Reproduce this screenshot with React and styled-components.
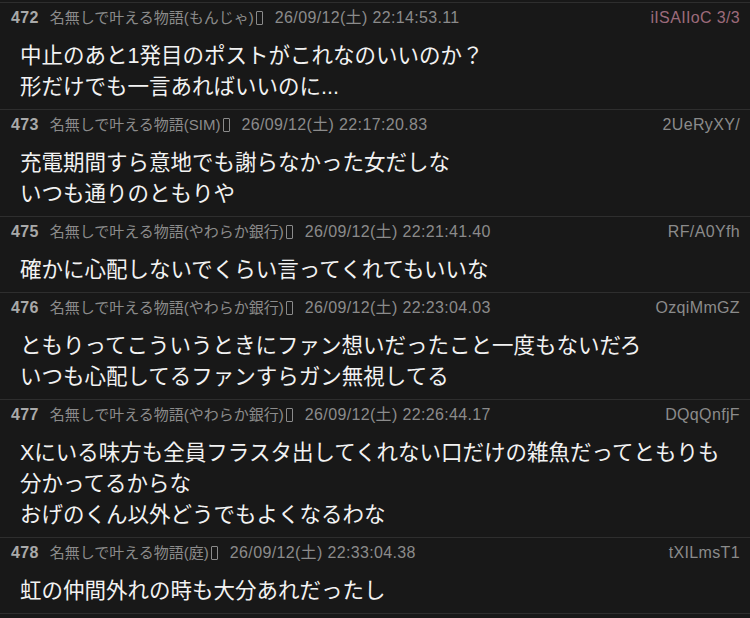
import React from 'react';
import styled, { createGlobalStyle } from 'styled-components';

const GlobalStyle = createGlobalStyle`
  html, body {
    margin: 0;
    padding: 0;
    background: #181818;
  }
  body {
    font-family: "Liberation Sans", "Noto Sans CJK JP", sans-serif;
    -webkit-font-smoothing: antialiased;
  }
`;

const posts = [
  {
    no: 472,
    name: '名無しで叶える物語(もんじゃ)',
    date: '26/09/12(土) 22:14:53.11',
    id: 'iISAIIoC 3/3',
    own: true,
    lines: ['中止のあと1発目のポストがこれなのいいのか？', '形だけでも一言あればいいのに...'],
  },
  {
    no: 473,
    name: '名無しで叶える物語(SIM)',
    date: '26/09/12(土) 22:17:20.83',
    id: '2UeRyXY/',
    lines: ['充電期間すら意地でも謝らなかった女だしな', 'いつも通りのともりや'],
  },
  {
    no: 475,
    name: '名無しで叶える物語(やわらか銀行)',
    date: '26/09/12(土) 22:21:41.40',
    id: 'RF/A0Yfh',
    lines: ['確かに心配しないでくらい言ってくれてもいいな'],
  },
  {
    no: 476,
    name: '名無しで叶える物語(やわらか銀行)',
    date: '26/09/12(土) 22:23:04.03',
    id: 'OzqiMmGZ',
    lines: ['ともりってこういうときにファン想いだったこと一度もないだろ', 'いつも心配してるファンすらガン無視してる'],
  },
  {
    no: 477,
    name: '名無しで叶える物語(やわらか銀行)',
    date: '26/09/12(土) 22:26:44.17',
    id: 'DQqQnfjF',
    lines: [
      'Xにいる味方も全員フラスタ出してくれない口だけの雑魚だってともりも',
      '分かってるからな',
      'おげのくん以外どうでもよくなるわな',
    ],
  },
  {
    no: 478,
    name: '名無しで叶える物語(庭)',
    date: '26/09/12(土) 22:33:04.38',
    id: 'tXILmsT1',
    lines: ['虹の仲間外れの時も大分あれだったし'],
  },
];

const Thread = styled.div`
  padding-top: 2px;
  border-bottom: 1px solid #2e2e2e;
`;

const Post = styled.div`
  border-top: 1px solid #2e2e2e;
  padding: 5px 10px 6px 11px;
`;

const Header = styled.div`
  display: flex;
  align-items: center;
  height: 20px;
  font-size: 15px;
  line-height: 20px;
  color: #8b8b8b;
  white-space: nowrap;
`;

// latin parts of the header render wider on the original device
const Latin = styled.span`
  font-size: 16px;
  letter-spacing: 0.35px;
`;

const Num = styled(Latin)`
  font-weight: 700;
  color: #a9a9a9;
  margin-right: 11px;
`;

const Name = styled.span`
  display: inline-flex;
  align-items: center;
  margin-right: 12px;
`;

const Tofu = styled.span`
  display: inline-block;
  width: 5px;
  height: 12px;
  margin-left: 2px;
  border: 1px solid #8b8b8b;
  border-radius: 1px;
`;

const PostId = styled(Latin)`
  margin-left: auto;
  color: ${(p) => (p.$own ? '#9c6b7b' : '#8b8b8b')};
`;

const Body = styled.div`
  margin-top: 13px;
  padding-left: 9px;
  font-size: 21.5px;
  line-height: 31px;
  color: #f2f2f2;
  white-space: nowrap;
`;

export default function App() {
  return (
    <>
      <GlobalStyle />
      <Thread>
        {posts.map((p) => (
          <Post key={p.no}>
            <Header>
              <Num>{p.no}</Num>
              <Name>
                {p.name}
                <Tofu />
              </Name>
              <Latin>{p.date}</Latin>
              <PostId $own={p.own}>{p.id}</PostId>
            </Header>
            <Body>
              {p.lines.map((l, i) => (
                <div key={i}>{l}</div>
              ))}
            </Body>
          </Post>
        ))}
      </Thread>
    </>
  );
}
